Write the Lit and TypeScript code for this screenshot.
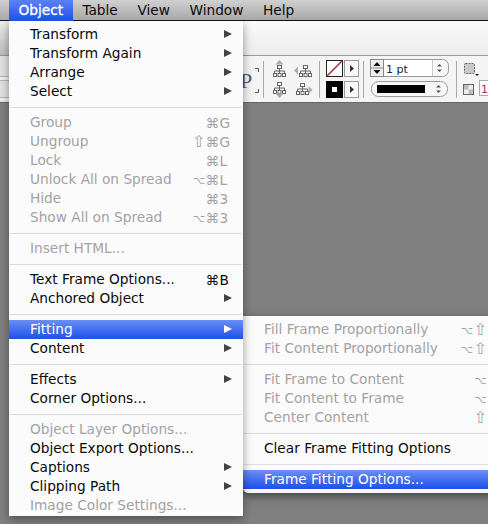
import { LitElement, html, css, svg } from "lit";
import { customElement } from "lit/decorators.js";

type Row = { t?: string; m?: string; k?: string; d?: boolean; arrow?: boolean; hi?: boolean; sep?: boolean };

const main: Row[] = [
  { t: "Transform", arrow: true }, { t: "Transform Again", arrow: true }, { t: "Arrange", arrow: true }, { t: "Select", arrow: true },
  { sep: true },
  { t: "Group", m: "⌘", k: "G", d: true }, { t: "Ungroup", m: "⇧⌘", k: "G", d: true }, { t: "Lock", m: "⌘", k: "L", d: true },
  { t: "Unlock All on Spread", m: "⌥⌘", k: "L", d: true }, { t: "Hide", m: "⌘", k: "3", d: true }, { t: "Show All on Spread", m: "⌥⌘", k: "3", d: true },
  { sep: true }, { t: "Insert HTML...", d: true }, { sep: true },
  { t: "Text Frame Options...", m: "⌘", k: "B" }, { t: "Anchored Object", arrow: true },
  { sep: true }, { t: "Fitting", arrow: true, hi: true }, { t: "Content", arrow: true },
  { sep: true }, { t: "Effects", arrow: true }, { t: "Corner Options..." },
  { sep: true }, { t: "Object Layer Options...", d: true }, { t: "Object Export Options..." },
  { t: "Captions", arrow: true }, { t: "Clipping Path", arrow: true }, { t: "Image Color Settings...", d: true },
];
const sub: Row[] = [
  { t: "Fill Frame Proportionally", m: "⌥⇧", d: true }, { t: "Fit Content Proportionally", m: "⌥⇧", d: true },
  { sep: true },
  { t: "Fit Frame to Content", m: "⌥", d: true }, { t: "Fit Content to Frame", m: "⌥", d: true }, { t: "Center Content", m: "⇧", d: true },
  { sep: true }, { t: "Clear Frame Fitting Options" }, { sep: true }, { t: "Frame Fitting Options...", hi: true },
];

const tree = (x: number, y: number) => svg`<g transform="translate(${x} ${y})" fill="#fff" stroke="#666" stroke-width="1">
  <rect x="4.5" y="0.5" width="4" height="3"/><path d="M6.5 4V6M1.500 8V6H11.500V8M6.500 6V8" fill="none"/>
  <rect x="0.500" y="8.500" width="3" height="3"/><rect x="5" y="8.500" width="3" height="3"/><rect x="9.500" y="8.500" width="3" height="3"/></g>`;

@customElement("app-root")
export class AppRoot extends LitElement {
  static styles = css`
    :host { display: block; width: 488px; height: 524px; position: relative; overflow: hidden; background: #808080;
      font-family: "DejaVu Sans", sans-serif; font-size: 13.7px; color: #0a0a0a; }
    .bar { height: 20px; display: flex; align-items: center; padding-left: 9px; background: linear-gradient(#d0d0d0, #a8a8a8); border-bottom: 1px solid #111; position: relative; z-index: 3; }
    .bar span { padding: 0 9.8px 1px; line-height: 20px; }
    .bar .on { color: #fff; -webkit-text-stroke: 0.3px #fff; background: linear-gradient(#5b83f3, #1f4fe6); padding: 0 9.5px 1px; }
    .blank { height: 34px; background: linear-gradient(#fafafa, #ececec); border-bottom: 1px solid #999; }
    .blank i { display: block; width: 9px; height: 34px; background: linear-gradient(#eeeeee, #bbbbbb); }
    .tools { height: 46px; background: #f4f4f4; border-bottom: 1px solid #666; display: flex; justify-content: space-between; overflow: hidden; }
    .tools svg { display: block; flex: none; }
    .strip { width: 9px; display: flex; flex-direction: column; background: #e2e2e2; }
    .strip b { display: block; border-bottom: 1px solid #b5b5b5; }
    .s1 { height: 20px; } .s2 { height: 3px; background: #efefef; } .s3 { height: 16px; } .s4 { height: 3px; background: #efefef; border: 0 !important; }
    .menu { position: absolute; background: #fbfbfb; box-sizing: border-box; padding-top: 4px; }
    .m1 { left: 9px; top: 21px; width: 234px; height: 495px; z-index: 2; box-shadow: 0 3px 9px rgba(0,0,0,.4); }
    .m2 { left: 243px; top: 316px; width: 260px; height: 177px; z-index: 1; border-radius: 0 0 5px 5px; box-shadow: 0 3px 10px rgba(0,0,0,.5); }
    .row { height: 19px; line-height: 18px; padding-left: 21px; white-space: nowrap; position: relative; }
    .row.d { color: #a2a2a2; }
    .row.hi { color: #fff; background: linear-gradient(#6a8ff5, #1e50ea); }
    .sc { position: absolute; top: 0; height: 19px; display: flex; align-items: center; justify-content: flex-end; }
    .m1 .sc { right: 10px; }
    .m2 .sc { right: 16px; }
    .g { display: block; width: 13.5px; text-align: center; line-height: 18px; overflow: visible; }
    .g.shift { font-size: 16px; }
    .g.alt { font-size: 10.5px; }
    .k { display: block; width: 13.5px; line-height: 18px; text-align: left; margin-left: 0.5px; }
    .arr { position: absolute; right: 11px; top: 5px; width: 0; height: 0; border-left: 8px solid #444; border-top: 4.5px solid transparent; border-bottom: 4.5px solid transparent; }
    .hi .arr { border-left-color: #fff; }
    .sep { height: 12px; display: flex; align-items: center; padding: 0 1px; }
    .sep i { flex: 1; height: 1px; background: #dcdcdc; }
  `;
  rows(list: Row[]) {
    const cls = (c: string) => (c === "⇧" ? "shift" : c === "⌥" ? "alt" : "");
    return list.map((r) =>
      r.sep
        ? html`<div class="sep"><i></i></div>`
        : html`<div class="row ${r.d ? "d" : ""} ${r.hi ? "hi" : ""}">${r.t}${r.m
            ? html`<span class="sc">${[...r.m].map((c) => html`<span class="g ${cls(c)}">${c}</span>`)}${r.k ? html`<span class="k">${r.k}</span>` : ""}</span>`
            : ""}${r.arrow ? html`<span class="arr"></span>` : ""}</div>`
    );
  }
  render() {
    return html`
      <div class="bar"><span class="on">Object</span><span>Table</span><span>View</span><span>Window</span><span>Help</span></div>
      <div class="blank"><i></i></div>
      <div class="tools">
        <div class="strip"><b class="s1"></b><b class="s2"></b><b class="s3"></b><b class="s4"></b></div>
        <svg width="250" height="46" viewBox="238 56 250 46">
          <text x="240" y="88" font-family="Liberation Serif" font-size="22" fill="#555">P</text>
          <path d="M255 68.500H258.500V72M255 92.500H258.500V89" fill="none" stroke="#555"/>
          <path d="M263.500 61V98M319.500 61V98M363.500 61V98M456.500 61V98" stroke="#aaa"/>
          ${tree(273, 65)} ${tree(299, 65)} ${tree(273, 82)} ${tree(296, 83)}
          <path d="M279.500 60L275.500 64.500H283.500ZM279.500 98L275.500 93.500H283.500ZM298 66.500L294 70.500L298 74.500ZM308.500 86L312.500 90L308.500 94Z" fill="#aaa"/>
          <rect x="326.500" y="60.500" width="16" height="16" fill="#fff" stroke="#222"/>
          <path d="M327 76L342 61" stroke="#b5333a" stroke-width="1.600"/>
          <rect x="326" y="81" width="17" height="17" fill="#000"/><rect x="332" y="87" width="5" height="5" fill="#fff"/>
          <rect x="344.500" y="60.500" width="14" height="16" fill="#f7f7f7" stroke="#999"/><rect x="344.500" y="81.500" width="14" height="16" fill="#f7f7f7" stroke="#999"/>
          <path d="M350 65L354 68.500L350 72ZM350 86L354 89.500L350 93Z" fill="#333"/>
          <rect x="370.500" y="59.500" width="78" height="17" rx="6" fill="#f7f7f7" stroke="#999"/>
          <rect x="384" y="60" width="48" height="16" fill="#fff"/>
          <path d="M432.500 60V76" stroke="#ccc"/>
          <rect x="370.500" y="59.500" width="13" height="17" fill="#eee" stroke="#888"/>
          <path d="M370 68H384" stroke="#888"/>
          <path d="M377 62L380.500 66H373.500ZM377 74L380.500 70H373.500Z" fill="#111"/>
          <text x="386" y="72.500" font-family="DejaVu Sans" font-size="11" fill="#223">1 pt</text>
          <path d="M439.500 64L442 66.500H437ZM439.500 72L442 69.500H437Z" fill="#555"/>
          <rect x="371.500" y="81.500" width="76" height="15" rx="7" fill="#f7f7f7" stroke="#999"/>
          <rect x="377" y="85" width="48" height="8" fill="#000"/>
          <path d="M438.500 85L441 87.500H436ZM438.500 93L441 90.500H436Z" fill="#555"/>
          <rect x="464.500" y="63.500" width="10" height="10" rx="1" fill="#c8c8c8" stroke="#666" stroke-dasharray="2 1"/>
          <path d="M475 74H479L477 76Z" fill="#222"/>
          <rect x="463.500" y="84.500" width="10" height="10" fill="#eee" stroke="#666"/>
          <path d="M464 85H468.500V89.500H464ZM468.500 89.500H473V94H468.500Z" fill="#bbb"/>
          <rect x="479.500" y="80.500" width="12" height="15" fill="#fff" stroke="#aaa"/>
          <text x="481" y="92.500" font-family="DejaVu Sans" font-size="11" fill="#934">1</text>
        </svg>
      </div>
      <div class="menu m1">${this.rows(main)}</div>
      <div class="menu m2">${this.rows(sub)}</div>
    `;
  }
}
